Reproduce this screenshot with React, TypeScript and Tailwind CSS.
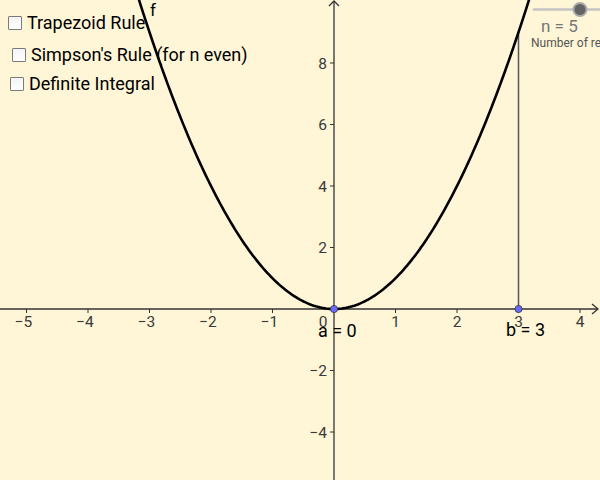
import React from "react";

const OX = 334;
const OY = 309;
const SX = 61.5;
const SY = 30.75;

const px = (x: number) => OX + x * SX;
const py = (y: number) => OY - y * SY;

function curvePath() {
  const pts: string[] = [];
  for (let i = 0; i <= 200; i++) {
    const x = -3.3 + (6.6 * i) / 200;
    const y = x * x;
    pts.push(`${i === 0 ? "M" : "L"}${px(x).toFixed(2)},${py(y).toFixed(2)}`);
  }
  return pts.join(" ");
}

const xTicks = [-5, -4, -3, -2, -1, 1, 2, 3, 4];
const yTicks = [-4, -2, 2, 4, 6, 8];

const fmt = (n: number) => (n < 0 ? `\u2212${Math.abs(n)}` : `${n}`);

function Check({ left, top, label }: { left: string; top: string; label: string }) {
  return (
    <label className={`absolute flex items-center gap-[5px] ${left} ${top}`}>
      <span className="block h-[14px] w-[14px] rounded-[1px] border border-[#7a7a7a] bg-gradient-to-b from-[#f4f4f4] to-white" />
      <span className="text-[18px] leading-none text-black">{label}</span>
    </label>
  );
}

export default function App() {
  return (
    <div className="relative h-[480px] w-[600px] overflow-hidden bg-[#fff5d7] font-['Roboto',sans-serif]">
      <svg className="absolute inset-0" width={600} height={480} viewBox="0 0 600 480">
        {/* axes */}
        <line x1={0} y1={OY} x2={598} y2={OY} stroke="#333" strokeWidth={1.3} />
        <polyline points={`592,304 598,${OY} 592,314`} fill="none" stroke="#333" strokeWidth={1.3} />
        <line x1={OX} y1={1} x2={OX} y2={480} stroke="#333" strokeWidth={1.3} />
        <polyline points={`329,6 ${OX},1 339,6`} fill="none" stroke="#333" strokeWidth={1.3} />

        {xTicks.map((t) => (
          <g key={`x${t}`}>
            <line x1={px(t)} y1={OY} x2={px(t)} y2={OY + 4} stroke="#333" strokeWidth={1} />
            <text x={px(t) + (t < 0 ? -3 : 0)} y={327} textAnchor="middle" fontSize={15.5} fill="#3a3a3a" fontFamily="Roboto">
              {fmt(t)}
            </text>
          </g>
        ))}
        <text x={323} y={327} textAnchor="middle" fontSize={15.5} fill="#3a3a3a" fontFamily="Roboto">0</text>

        {yTicks.map((t) => (
          <g key={`y${t}`}>
            <line x1={OX - 4} y1={py(t)} x2={OX} y2={py(t)} stroke="#333" strokeWidth={1} />
            <text x={327} y={py(t) + 5.5} textAnchor="end" fontSize={15.5} fill="#3a3a3a" fontFamily="Roboto">
              {fmt(t)}
            </text>
          </g>
        ))}

        {/* segment at b */}
        <line x1={px(3)} y1={py(9)} x2={px(3)} y2={OY} stroke="#555" strokeWidth={1.5} />

        {/* f(x) */}
        <path d={curvePath()} fill="none" stroke="#000" strokeWidth={2.6} />
        <text x={150} y={16} fontSize={17} fill="#000" fontFamily="Roboto">f</text>

        {/* points a, b */}
        <circle cx={OX} cy={OY} r={3.6} fill="#6a6aff" stroke="#333" strokeWidth={0.8} />
        <circle cx={px(3)} cy={OY} r={3.6} fill="#6a6aff" stroke="#333" strokeWidth={0.8} />
        <text x={318} y={337} fontSize={18} fill="#000" fontFamily="Roboto">a = 0</text>
        <text x={506} y={336} fontSize={18} fill="#000" fontFamily="Roboto">b = 3</text>

        {/* slider n */}
        <line x1={533} y1={9.5} x2={600} y2={9.5} stroke="#c4c4c4" strokeWidth={2.5} />
        <circle cx={580} cy={9.5} r={6.5} fill="#646464" stroke="#a9a9a9" strokeWidth={2} />
        <text x={541} y={32} fontSize={17} fill="#777" fontFamily="Roboto">n = 5</text>
        <text x={531} y={47} fontSize={12} fill="#555" fontFamily="Roboto">Number of rectangles</text>
      </svg>

      <Check left="left-[8px]" top="top-[14px]" label="Trapezoid Rule" />
      <Check left="left-[12px]" top="top-[46px]" label="Simpson's Rule (for n even)" />
      <Check left="left-[10px]" top="top-[75px]" label="Definite Integral" />
    </div>
  );
}
